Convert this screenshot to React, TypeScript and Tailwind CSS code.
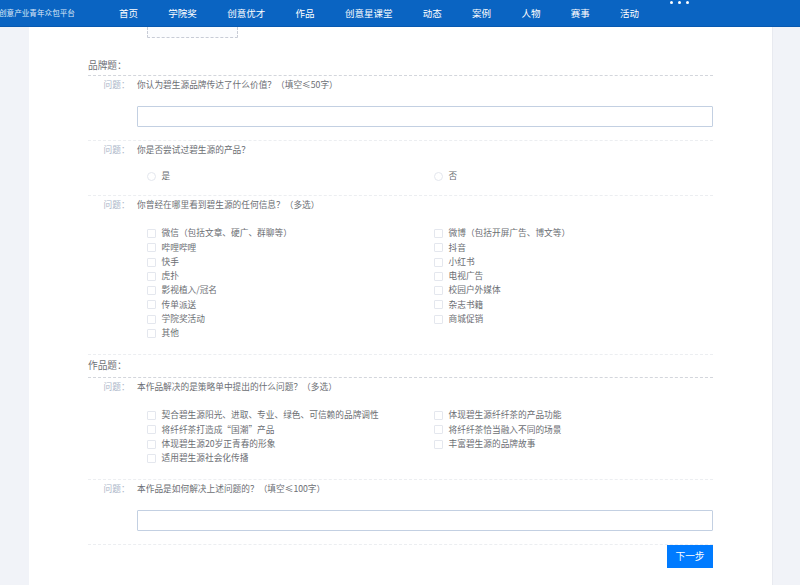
import React from "react";

const NAV = ["首页", "学院奖", "创意优才", "作品", "创意星课堂", "动态", "案例", "人物", "赛事", "活动"];
const Q3 = [
  ["微信（包括文章、硬广、群聊等）", "微博（包括开屏广告、博文等）"],
  ["哔哩哔哩", "抖音"],
  ["快手", "小红书"],
  ["虎扑", "电视广告"],
  ["影视植入/冠名", "校园户外媒体"],
  ["传单派送", "杂志书籍"],
  ["学院奖活动", "商城促销"],
  ["其他", ""],
];
const Q4 = [
  ["契合碧生源阳光、进取、专业、绿色、可信赖的品牌调性", "体现碧生源纤纤茶的产品功能"],
  ["将纤纤茶打造成“国潮”产品", "将纤纤茶恰当融入不同的场景"],
  ["体现碧生源20岁正青春的形象", "丰富碧生源的品牌故事"],
  ["适用碧生源社会化传播", ""],
];

function Label({ text }: { text: string }) {
  return (
    <div className="flex h-[18px] items-center">
      <span className="ml-[15.5px] w-[33.5px] text-[8.7px] text-[#aab5c8] whitespace-nowrap">问题：</span>
      <span className="text-[8.7px] text-[#6b6e73] whitespace-nowrap">{text}</span>
    </div>
  );
}

function Option({ text, round }: { text: string; round?: boolean }) {
  if (!text) return <div className="h-[14.25px]" />;
  return (
    <div className="flex h-[14.25px] items-center gap-[5.5px]">
      <span className={`h-[9px] w-[9px] shrink-0 border border-[#e4e7ee] bg-white ${round ? "rounded-full" : "rounded-[1px]"}`} />
      <span className="text-[8.7px] leading-none text-[#6b6e73] whitespace-nowrap">{text}</span>
    </div>
  );
}

function Options({ rows }: { rows: string[][] }) {
  return (
    <div className="mt-[12.5px] ml-[59px] grid w-[566px] grid-cols-[287px_279px]">
      {rows.flat().map((t, i) => (
        <Option key={i} text={t} />
      ))}
    </div>
  );
}

function Input() {
  return <div className="mt-[12px] ml-[49px] h-[21px] w-[576px] rounded-[1px] border border-[#c3d0e2] bg-white" />;
}

function Title({ text, className }: { text: string; className: string }) {
  return (
    <div className={`flex items-center border-b border-dashed border-[#d3d6dc] pb-[2px] text-[9.7px] text-[#6f7277] ${className}`}>
      {text}
    </div>
  );
}

export default function App() {
  return (
    <div className="flex h-[585px] w-[800px] flex-col overflow-hidden bg-[#f1f3f8] font-['Noto_Sans_CJK_SC','Noto_Sans',sans-serif]">
      <header className="flex h-[27px] shrink-0 items-center border-b border-[#0859b0] bg-[#0a64c2] text-white">
        <div className="ml-[-1px] w-[120px] shrink-0 text-[7.6px] text-[#dce9f7] whitespace-nowrap">创意产业青年众包平台</div>
        <nav className="flex gap-[30.33px] text-[9.5px]">
          {NAV.map((n) => (
            <span key={n} className="whitespace-nowrap">{n}</span>
          ))}
        </nav>
        <div className="ml-[30.5px] mb-[21px] flex gap-[4.5px]">
          <span className="h-[3.5px] w-[3.5px] rounded-full bg-white" />
          <span className="h-[3.5px] w-[3.5px] rounded-full bg-white" />
          <span className="h-[3.5px] w-[3.5px] rounded-full bg-white" />
        </div>
      </header>

      <main className="ml-[29px] flex w-[743.5px] flex-1 flex-col border-r border-[#e8eaf0] bg-white pl-[59px]">
        <div className="ml-[59px] h-[11px] w-[91px] rounded-b-[1px] border-x border-b border-dashed border-[#c8ccd6] bg-[#fbfcfe]" />

        <div className="w-[625px]">
          <Title text="品牌题：" className="mt-[20px] h-[18px]" />

          <section className="h-[65px] border-b border-dashed border-[#eceef1]">
            <Label text="你认为碧生源品牌传达了什么价值？（填空≤50字）" />
            <Input />
          </section>

          <section className="h-[55px] border-b border-dashed border-[#eceef1]">
            <Label text="你是否尝试过碧生源的产品？" />
            <div className="mt-[10.5px] ml-[59px] grid w-[566px] grid-cols-[287px_279px]">
              <Option text="是" round />
              <Option text="否" round />
            </div>
          </section>

          <section className="h-[159px] border-b border-dashed border-[#eceef1]">
            <Label text="你曾经在哪里看到碧生源的任何信息？（多选）" />
            <Options rows={Q3} />
          </section>

          <Title text="作品题：" className="h-[23px]" />

          <section className="h-[102px] border-b border-dashed border-[#eceef1]">
            <Label text="本作品解决的是策略单中提出的什么问题？（多选）" />
            <Options rows={Q4} />
          </section>

          <section className="h-[65px] border-b border-dashed border-[#eceef1]">
            <Label text="本作品是如何解决上述问题的？（填空≤100字）" />
            <Input />
          </section>

          <div className="flex justify-end">
            <button className="h-[23px] w-[46px] bg-[#007bff] text-[9.7px] text-white">下一步</button>
          </div>
        </div>
      </main>
    </div>
  );
}
